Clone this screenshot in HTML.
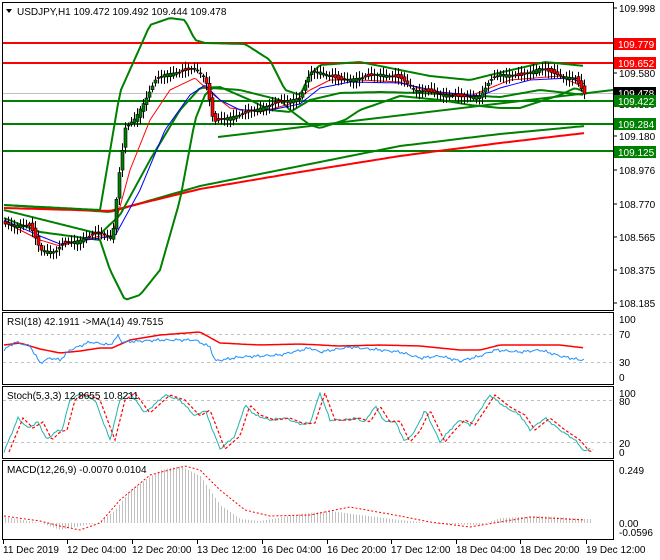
<!DOCTYPE html><html><head><meta charset="utf-8"><style>
body{margin:0;background:#fff;width:660px;height:560px;overflow:hidden}
svg{display:block;font-family:"Liberation Sans",sans-serif;font-size:10px}
</style></head><body>
<svg id="s" width="660" height="560" xmlns="http://www.w3.org/2000/svg">
<rect width="660" height="560" fill="#fff"/>
<g id="main"></g>
</svg>
<script>
var S=document.getElementById('s'),NS='http://www.w3.org/2000/svg',out='';
function interp(k,x){for(var i=0;i<k.length-1;i++){if(x<=k[i+1][0]){var a=k[i],b=k[i+1],t=(x-a[0])/(b[0]-a[0]);return a[1]+(b[1]-a[1])*t;}}return k[k.length-1][1];}
function pl(k,col,w,dash,x0,x1,step,noise){var p=[];step=step||2;for(var x=x0;x<=x1;x+=step){var y=interp(k,x)+(noise?(Math.sin(x*1.7)+Math.sin(x*0.63))*noise:0);p.push(x.toFixed(1)+','+y.toFixed(1));}out+='<polyline fill="none" stroke="'+col+'" stroke-width="'+w+'"'+(dash?' stroke-dasharray="'+dash+'"':'')+' points="'+p.join(' ')+'"/>';}
// frames
out+='<rect x="2.5" y="2.5" width="611" height="308" fill="none" stroke="#000"/>';
out+='<rect x="2.5" y="312.5" width="611" height="72" fill="none" stroke="#000"/>';
out+='<rect x="2.5" y="386.5" width="611" height="72" fill="none" stroke="#000"/>';
out+='<rect x="2.5" y="460.5" width="611" height="79" fill="none" stroke="#000"/>';
// horizontal lines
out+='<line x1="3" y1="93.5" x2="613" y2="93.5" stroke="#c0c0c0"/>';
[[43,'#f00'],[63,'#f00'],[101,'#008000'],[124,'#008000'],[151,'#008000']].forEach(function(l){out+='<line x1="3" y1="'+l[0]+'" x2="613" y2="'+l[0]+'" stroke="'+l[1]+'" stroke-width="2"/>';});
// price path
var P=[[4,224],[30,226],[40,250],[55,252],[62,244],[80,240],[100,232],[112,238],[118,180],[125,128],[135,118],[145,100],[155,80],[165,74],[180,72],[195,68],[205,78],[210,105],[213,122],[225,118],[240,115],[260,108],[280,102],[300,98],[310,72],[320,72],[340,80],[360,78],[380,74],[400,78],[415,90],[430,92],[460,97],[480,96],[490,80],[500,74],[520,76],[540,68],[560,76],[575,78],[585,96]];
// slow MAs & trend
pl([[4,205],[110,212],[200,186],[300,166],[400,146],[500,134],[585,126]],'#008000',2,null,4,585,4);
pl([[4,208],[110,211],[200,189],[300,172],[400,156],[500,143],[585,133]],'#f00',2,null,4,585,4);
out+='<line x1="218" y1="137" x2="613" y2="90" stroke="#008000" stroke-width="2"/>';
// bollinger
pl([[4,205],[100,210],[120,92],[150,25],[170,18],[185,20],[195,40],[205,43],[245,44],[270,60],[285,90],[300,95],[310,75],[320,65],[360,62],[400,70],[430,76],[470,80],[490,75],[520,68],[545,62],[585,66]],'#008000',2,null,4,585,3);
pl([[4,218],[40,232],[100,240],[110,270],[125,300],[140,295],[160,270],[180,200],[195,120],[205,95],[212,88],[240,90],[280,100],[290,110],[310,125],[320,128],[345,120],[360,110],[400,96],[440,100],[470,105],[500,108],[520,108],[560,95],[575,88],[585,92]],'#008000',2,null,4,585,3);
pl([[4,210],[100,234],[120,215],[150,160],[180,110],[200,88],[220,87],[250,100],[270,110],[290,112],[310,100],[340,93],[380,92],[420,93],[460,95],[500,97],[540,90],[585,95]],'#008000',2,null,4,585,3);
// fast MAs
pl([[4,222],[40,240],[60,246],[100,236],[112,236],[130,170],[150,120],[170,90],[195,78],[210,92],[230,108],[260,112],[290,104],[310,90],[330,80],[360,80],[400,82],[430,92],[470,96],[490,88],[510,80],[560,76],[585,88]],'#f00',1,null,4,585,2);
pl([[4,220],[40,236],[60,244],[100,238],[115,236],[140,190],[165,130],[190,95],[205,85],[220,100],[240,110],[270,110],[300,104],[320,88],[350,82],[400,83],[440,92],[480,96],[500,88],[530,80],[570,78],[585,84]],'#00f',1,null,4,585,2);
// candles
for(var x=5;x<=585;x+=3){var c=interp(P,x),o=interp(P,x-3)+(Math.sin(x*2.3)*3);var hi=Math.min(o,c)-2-Math.abs(Math.sin(x*1.3))*5,lo=Math.max(o,c)+2+Math.abs(Math.cos(x*0.9))*5;var up=c<o;out+='<line x1="'+(x+0.5)+'" y1="'+hi+'" x2="'+(x+0.5)+'" y2="'+lo+'" stroke="#000"/>';out+='<rect x="'+(x-1)+'" y="'+Math.min(o,c)+'" width="3" height="'+Math.max(1,Math.abs(c-o))+'" fill="'+(up?'#008000':'#f00')+'" stroke="#000" stroke-width="0.6"/>';}
// price axis labels
[[12,'109.998'],[77,'109.580'],[108,'109.380'],[140,'109.180'],[174,'108.976'],[208,'108.770'],[241,'108.565'],[274,'108.375'],[307,'108.185']].forEach(function(l){out+='<line x1="613" y1="'+(l[0]-4)+'" x2="617" y2="'+(l[0]-4)+'" stroke="#000"/><text x="619" y="'+l[0]+'">'+l[1]+'</text>';});
[[38,'#f00','109.779','#fff'],[57,'#f00','109.652','#fff'],[87,'#000','109.478','#fff'],[95,'#008000','109.422','#fff'],[118,'#008000','109.284','#fff'],[146,'#008000','109.125','#fff']].forEach(function(l){out+='<rect x="614" y="'+l[0]+'" width="42" height="12" fill="'+l[1]+'"/><text x="618" y="'+(l[0]+10)+'" fill="'+l[3]+'">'+l[2]+'</text>';});
out+='<text x="603" y="92" font-size="9" fill="#000"> </text>';
out+='<polygon points="6,9 12,9 9,13" fill="#000"/><text x="17" y="15">USDJPY,H1  109.472 109.492 109.444 109.478</text>';
// RSI
out+='<line x1="3" y1="334.5" x2="613" y2="334.5" stroke="#c0c0c0" stroke-dasharray="3,3"/><line x1="3" y1="362.5" x2="613" y2="362.5" stroke="#c0c0c0" stroke-dasharray="3,3"/>';
pl([[4,345],[20,343],[40,349],[60,353],[80,351],[100,348],[112,348],[130,340],[160,335],[200,332],[220,343],[260,345],[300,344],[340,346],[380,345],[420,346],[460,350],[480,350],[500,345],[560,345],[585,348]],'#f00',1.5,null,4,585,3);
pl([[4,350],[15,342],[30,346],[40,363],[50,358],[60,360],[70,350],[90,342],[110,345],[118,336],[122,342],[160,340],[195,340],[210,347],[215,361],[240,357],[280,355],[310,348],[320,352],[350,347],[400,352],[420,358],[440,356],[460,361],[480,356],[495,350],[520,352],[540,350],[560,356],[580,360],[585,359]],'#1e90ff',1,null,4,585,2,0.8);
out+='<text x="7" y="325">RSI(18) 42.1911  -&gt;MA(14) 49.7515</text>';
[[323,'100'],[338,'70'],[366,'30'],[381,'0']].forEach(function(l){out+='<text x="619" y="'+l[0]+'">'+l[1]+'</text>';});
// Stoch
out+='<line x1="3" y1="400.5" x2="613" y2="400.5" stroke="#c0c0c0" stroke-dasharray="3,3"/><line x1="3" y1="442.5" x2="613" y2="442.5" stroke="#c0c0c0" stroke-dasharray="3,3"/>';
var ST=[[4,452],[18,418],[28,428],[38,422],[47,440],[55,432],[62,430],[70,400],[80,394],[95,400],[110,440],[120,400],[130,393],[145,413],[165,395],[180,400],[195,416],[205,410],[220,449],[235,436],[245,405],[255,415],[270,420],[285,418],[300,424],[310,423],[320,393],[330,420],[345,420],[355,418],[365,422],[375,406],[385,422],[395,421],[405,442],[415,431],[425,410],[440,442],[450,430],[460,420],[470,425],[490,395],[505,407],[520,415],[530,430],[545,418],[560,430],[575,440],[585,452],[590,448]];
pl(ST,'#20b2aa',1,null,4,590,2,0.6);
pl(ST.map(function(p){return [p[0]+5,p[1]];}),'#f00',1.2,'3,2',9,593,2);
out+='<text x="7" y="399">Stoch(5,3,3) 12.8655 10.8211</text>';
[[397,'100'],[405,'80'],[447,'20'],[456,'0']].forEach(function(l){out+='<text x="619" y="'+l[0]+'">'+l[1]+'</text>';});
// MACD hist
for(var x=5;x<=590;x+=3){var v=interp([[4,517],[40,523],[60,530],[100,522],[115,510],[130,490],[160,470],[180,466],[200,476],[220,505],[240,519],[260,521],[300,514],[330,511],[360,515],[400,520],[440,524],[480,525],[500,518],[540,516],[585,519]],x);out+='<line x1="'+(x+0.5)+'" y1="523" x2="'+(x+0.5)+'" y2="'+v+'" stroke="#c0c0c0"/>';}
pl([[4,516],[40,521],[60,526],[80,530],[100,523],[120,500],[150,475],[185,466],[200,470],[220,490],[245,510],[270,516],[310,515],[350,507],[400,516],[430,522],[470,527],[500,522],[530,517],[585,520]],'#f00',1,'2,2',4,585,2);
out+='<text x="7" y="473">MACD(12,26,9) -0.0070 0.0104</text>';
[[474,'0.249'],[527,'0.00'],[536,'-0.0596']].forEach(function(l){out+='<text x="619" y="'+l[0]+'">'+l[1]+'</text>';});
// time axis
[[3,'11 Dec 2019'],[67,'12 Dec 04:00'],[132,'12 Dec 20:00'],[197,'13 Dec 12:00'],[262,'16 Dec 04:00'],[327,'16 Dec 20:00'],[391,'17 Dec 12:00'],[456,'18 Dec 04:00'],[520,'18 Dec 20:00'],[586,'19 Dec 12:00']].forEach(function(l){out+='<line x1="'+(l[0]+0.5)+'" y1="540" x2="'+(l[0]+0.5)+'" y2="544" stroke="#000"/><text x="'+l[0]+'" y="553">'+l[1]+'</text>';});
document.getElementById('main').innerHTML=out;
</script>
</body></html>
